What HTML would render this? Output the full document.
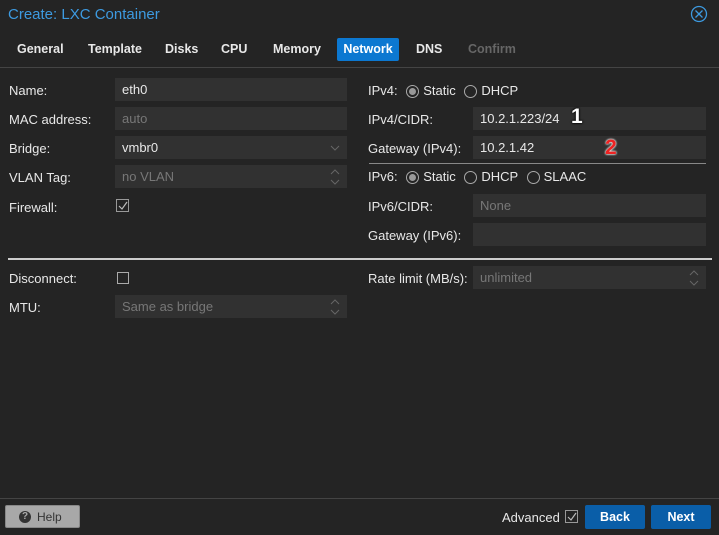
<!DOCTYPE html><html><head><style>
body{margin:0;width:719px;height:535px;background:#242424;font-family:"Liberation Sans",sans-serif;font-size:13px;color:#e8e8e8;position:relative;overflow:hidden}
.a{position:absolute;white-space:nowrap}
.f{position:absolute;background:#313131;height:23px;box-sizing:border-box;padding-left:7px;line-height:24px}
.dim{color:#777}
.b{font-weight:bold;font-size:12.5px}
.rad{display:inline-block;width:13px;height:13px;border:1px solid #aaa;border-radius:50%;vertical-align:-3px;margin-right:4px;box-sizing:border-box;position:relative}
.rad.on::after{content:"";position:absolute;left:2px;top:2px;width:7px;height:7px;border-radius:50%;background:#999}
.chk{position:absolute;width:12px;height:12px;border:1px solid #aaa;box-sizing:border-box}
.arr{position:absolute;right:7px;top:4px}
</style></head><body>
<div class="a" style="left:8px;top:6px;font-size:15px;color:#3d9ae0">Create: LXC Container</div>
<svg class="a" style="left:690px;top:5px" width="18" height="18"><circle cx="9" cy="9" r="7.5" fill="none" stroke="#3d9ae0" stroke-width="1.3"/><path d="M5.5 5.5l7 7M12.5 5.5l-7 7" stroke="#3d9ae0" stroke-width="1.3"/></svg>
<div class="a b" style="left:17px;top:42px">General</div>
<div class="a b" style="left:88px;top:42px">Template</div>
<div class="a b" style="left:165px;top:42px">Disks</div>
<div class="a b" style="left:221px;top:42px">CPU</div>
<div class="a b" style="left:273px;top:42px">Memory</div>
<div class="a b" style="left:337px;top:38px;width:62px;height:23px;background:#0c78d1;border-radius:2px;line-height:23px;text-align:center;color:#fff">Network</div>
<div class="a b" style="left:416px;top:42px">DNS</div>
<div class="a b" style="left:468px;top:42px;color:#666">Confirm</div>
<div class="a" style="left:0;top:67px;width:719px;height:1px;background:#444"></div>
<div class="a" style="left:9px;top:83px">Name:</div><div class="f" style="left:115px;top:78px;width:232px">eth0</div>
<div class="a" style="left:9px;top:112px">MAC address:</div><div class="f dim" style="left:115px;top:107px;width:232px">auto</div>
<div class="a" style="left:9px;top:141px">Bridge:</div><div class="f" style="left:115px;top:136px;width:232px">vmbr0<svg class="arr" style="top:9px" width="10" height="6"><path d="M1 1l4 4 4-4" fill="none" stroke="#666"/></svg></div>
<div class="a" style="left:9px;top:170px">VLAN Tag:</div><div class="f dim" style="left:115px;top:165px;width:232px">no VLAN<svg class="arr" width="10" height="16"><path d="M1 5l4-4 4 4M1 11l4 4 4-4" fill="none" stroke="#666"/></svg></div>
<div class="a" style="left:9px;top:200px">Firewall:</div>
<svg class="a" style="left:116px;top:199px" width="14" height="14"><rect x=".5" y=".5" width="12" height="12" fill="none" stroke="#999"/><path d="M3 7l3 3 5-7" fill="none" stroke="#bbb" stroke-width="1.2"/></svg>
<div class="a" style="left:368px;top:83px">IPv4: <span style="margin-left:5px"><span class="rad on"></span>Static</span> <span style="margin-left:5px"><span class="rad"></span>DHCP</span></div>
<div class="a" style="left:368px;top:112px">IPv4/CIDR:</div><div class="f" style="left:473px;top:107px;width:233px">10.2.1.223/24</div>
<div class="a" style="left:571px;top:105px;color:#fff;font-size:21px;font-weight:bold;text-shadow:0 0 2px #000,0 0 2px #000">1</div>
<div class="a" style="left:368px;top:141px">Gateway (IPv4):</div><div class="f" style="left:473px;top:136px;width:233px">10.2.1.42</div>
<div class="a" style="left:605px;top:136px;color:#e22;font-size:21px;font-weight:bold;text-shadow:0 0 2px #fff,0 0 2px #fff">2</div>
<div class="a" style="left:369px;top:163px;width:337px;height:1px;background:#888"></div>
<div class="a" style="left:368px;top:169px">IPv6: <span style="margin-left:5px"><span class="rad on"></span>Static</span> <span style="margin-left:5px"><span class="rad"></span>DHCP</span> <span style="margin-left:5px"><span class="rad"></span>SLAAC</span></div>
<div class="a" style="left:368px;top:199px">IPv6/CIDR:</div><div class="f dim" style="left:473px;top:194px;width:233px">None</div>
<div class="a" style="left:368px;top:228px">Gateway (IPv6):</div><div class="f" style="left:473px;top:223px;width:233px"></div>
<div class="a" style="left:8px;top:258px;width:704px;height:2px;background:#ccc"></div>
<div class="a" style="left:9px;top:271px">Disconnect:</div><div class="chk" style="left:117px;top:272px"></div>
<div class="a" style="left:368px;top:271px">Rate limit (MB/s):</div><div class="f dim" style="left:473px;top:266px;width:233px">unlimited<svg class="arr" width="10" height="16"><path d="M1 5l4-4 4 4M1 11l4 4 4-4" fill="none" stroke="#666"/></svg></div>
<div class="a" style="left:9px;top:300px">MTU:</div><div class="f dim" style="left:115px;top:295px;width:232px">Same as bridge<svg class="arr" width="10" height="16"><path d="M1 5l4-4 4 4M1 11l4 4 4-4" fill="none" stroke="#666"/></svg></div>
<div class="a" style="left:0;top:498px;width:719px;height:1px;background:#444"></div>
<div class="a" style="left:5px;top:505px;width:75px;height:23px;background:#a8a8a8;border:1px solid #888;box-sizing:border-box;border-radius:2px;color:#333;display:flex;align-items:center;font-size:12px"><span style="display:inline-block;width:12px;height:12px;border-radius:50%;background:#333;color:#aaa;font-size:10px;line-height:12px;text-align:center;margin:0 6px 0 13px;font-weight:bold">?</span>Help</div>
<div class="a" style="left:502px;top:510px">Advanced</div>
<svg class="a" style="left:565px;top:510px" width="14" height="14"><rect x=".5" y=".5" width="12" height="12" fill="none" stroke="#999"/><path d="M3 7l3 3 5-7" fill="none" stroke="#bbb" stroke-width="1.2"/></svg>
<div class="a b" style="left:585px;top:505px;width:60px;height:24px;background:#0a5ea8;border-radius:2px;line-height:24px;text-align:center;color:#fff">Back</div>
<div class="a b" style="left:651px;top:505px;width:60px;height:24px;background:#0a5ea8;border-radius:2px;line-height:24px;text-align:center;color:#fff">Next</div>
</body></html>
